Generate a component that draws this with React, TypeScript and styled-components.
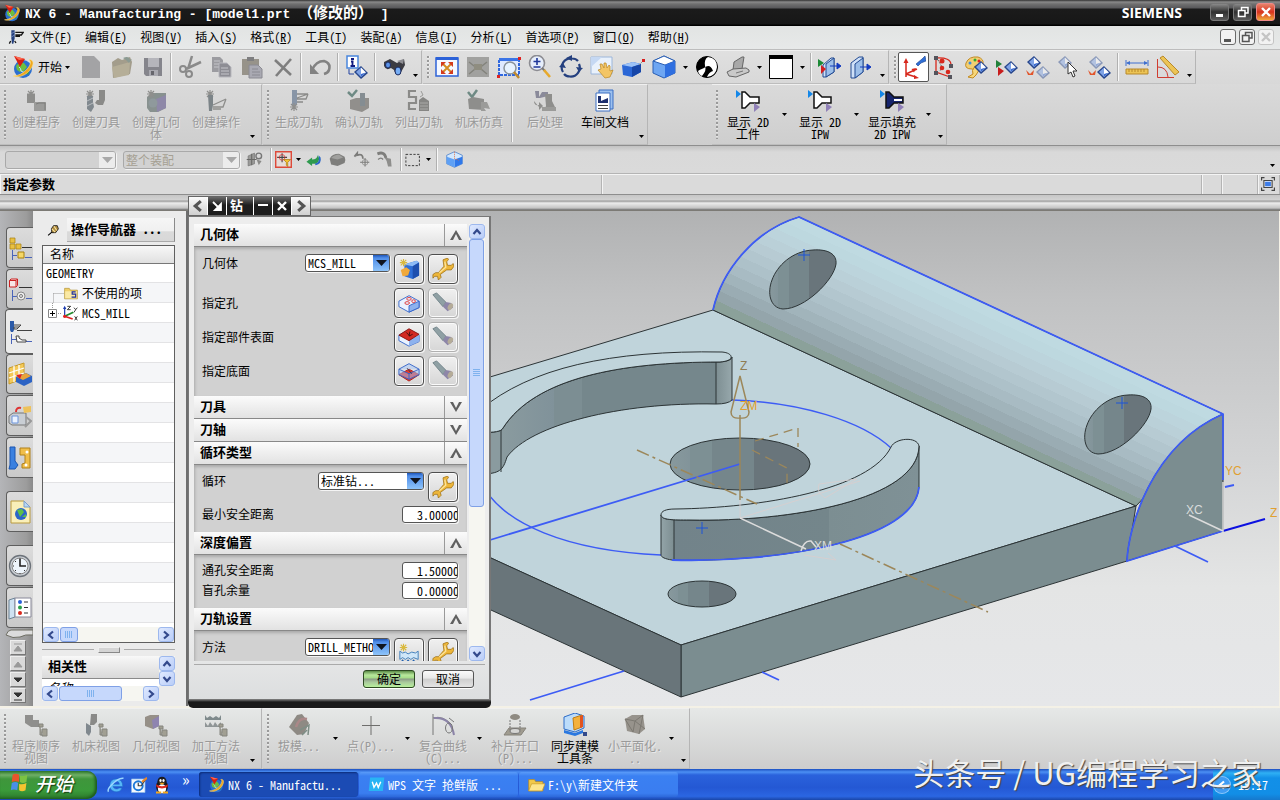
import React from 'react';
import styled, { createGlobalStyle, css } from 'styled-components';

const uiFont = '"Noto Sans Mono CJK SC", "Noto Sans CJK SC", "Liberation Mono", monospace';

const GlobalStyle = createGlobalStyle`
  * { box-sizing: border-box; }
  body { margin: 0; background: #d4d4d4; }
  button, input, select { font: inherit; color: inherit; margin: 0; padding: 0; border: 0; background: none; border-radius: 0; }
  body { font-family: ${uiFont}; font-size: 12px; line-height: 12px; color: #000; }
`;

/* ---------- icons ---------- */

const Svg = styled.svg<{ $s: number }>`
  width: ${p => p.$s}px;
  height: ${p => p.$s}px;
  flex: none;
  display: block;
`;

const Diamond = ({ x, y, pale = false }: { x: number; y: number; pale?: boolean }) => (
  <g transform={`translate(${x} ${y})`} opacity={pale ? 0.45 : 1}>
    <path d="M-7 0L0-6L7 1L0 7Z" fill="#27468c" />
    <path d="M-5 0L0-4.500V5Z" fill="#7fa3e6" />
    <path d="M0-4.500L5 0.500L0 5Z" fill="#fff" />
    <path d="M5 0.500L0 5V2Z" fill="#3a6bd0" />
  </g>
);

const Spark = ({ x, y, c }: { x: number; y: number; c: string }) => (
  <path transform={`translate(${x} ${y})`} d="M0-4V4M-4 0H4M-3-3L3 3M3-3L-3 3" stroke={c} strokeWidth="1.200" />
);

const GT = '#8f8f8d';

const icons: Record<string, React.ReactNode> = {
  nx: (
    <>
      <circle cx="12" cy="14" r="9" fill="#2b6fd0" />
      <path d="M5 11q3-4 8-3l3 4l-3 4l-4 1l-3-2z" fill="#6fbf3f" />
      <path d="M14 17l5-3l-2 6z" fill="#3f9f3a" />
      <path d="M8 12q2 1 2 4l4 2" stroke="#bfe2ff" fill="none" />
      <path d="M2 21C9 24 20 18 22 9C22.500 6 20 4 18 5C20 6 20 9 17 13C13 18 7 21 2 21Z" fill="#f0a71e" stroke="#fbe28a" strokeWidth="0.600" />
      <path d="M3 1L14 4L9 12Z" fill="#d81e12" /><path d="M3 1L14 4L8 5Z" fill="#ff6a50" />
    </>
  ),
  newDoc: <path d="M3 1H15L21 7V23H3Z" fill="#a3a3a5" />,
  open: <><path d="M2 7L8 3L12 5L20 2L22 7L20 19L3 23Z" fill="#a39d8c" /><path d="M2 12L20 7L19 20L4 23Z" fill="#b5ae98" /><path d="M13 3Q19 0 20 5L22 4L19 8L16 5Z" fill="#8b9a92" /></>,
  save: <><path d="M3 3H21V21H5L3 19Z" fill="#85858c" /><path d="M7 3H18V12H7Z" fill="#b5b5bb" /><path d="M8 15H17V21H8Z" fill="#a9a9b0" /><path d="M10 16h3v4h-3z" fill="#66666c" /></>,
  cut: <><path d="M14 1L10 14M23 7L8 14" stroke="#8a8a8a" strokeWidth="2.500" /><circle cx="5" cy="14" r="3" fill="none" stroke="#8a8a8a" strokeWidth="2" /><circle cx="11" cy="19" r="3" fill="none" stroke="#8a8a8a" strokeWidth="2" /></>,
  copy: <><path d="M3 2H11L14 5V17H3Z" fill="#9b9ba0" /><path d="M5 6h6M5 9h6M5 12h6" stroke="#c5c5ca" /><path d="M10 8H18L22 12V22H10Z" fill="#8d8d94" stroke="#b8b8be" /><path d="M12 13h7M12 16h8M12 19h8" stroke="#c5c5ca" /></>,
  paste: <><path d="M2 4H19V20H2Z" fill="#97938a" /><path d="M7 2H14V6H7Z" fill="#7e7e80" /><path d="M9 10H18L22 14V23H9Z" fill="#a9a9b2" stroke="#8a8a92" /><path d="M12 14h6M12 17h8M12 20h8" stroke="#8a8a92" /></>,
  del: <path d="M4 5L20 20M20 4L5 21" stroke="#7f7f7f" strokeWidth="2.600" />,
  undo: <><path d="M4 15Q8 6 16 6Q23 8 21 15Q20 18 16 19" fill="none" stroke="#828282" strokeWidth="2.600" /><path d="M2 9V19H11Z" fill="#828282" /></>,
  info: <><path d="M2 1H13V13H2Z" fill="#fff" stroke="#4a86dd" strokeWidth="1.500" /><path d="M6 4H9M7.500 6.500V11M6 6.500H8.500M5.500 11H10" stroke="#101a80" strokeWidth="1.800" /><path d="M4 14V19H9" stroke="#2343a0" fill="none" /><Diamond x={16} y={17} /></>,
  binoc: <><path d="M2 7L8 4L15 8L22 4L23 10L18 19Q13 20 12 15L9 13Q4 16 2 11Z" fill="#3c3c42" /><path d="M15 6L22 4L21 9Z" fill="#8d8d92" /><ellipse cx="6" cy="10" rx="2.500" ry="3" fill="#5b93e8" stroke="#1b2b60" /><ellipse cx="16" cy="16" rx="3" ry="4" fill="#77aef5" stroke="#1b2b60" /></>,
  fit: <><path d="M1 3H23V21H1Z" fill="#f4f8ff" stroke="#2c62d8" strokeWidth="1.500" /><path d="M1 2H23V5H1Z" fill="#2c62d8" /><path d="M8 9L16 17M16 9L8 17" stroke="#d38a1e" strokeWidth="2" /><path d="M6 7h5l-5 5zM18 7v5l-5-5zM6 19v-5l5 5zM18 19h-5l5-5z" fill="#d33a1e" /></>,
  fitGray: <><path d="M1 2H23V22H1Z" fill="#a1a19f" /><path d="M3 7L12 14L21 7M3 19L9 14M21 19L15 14" stroke="#83837c" fill="none" strokeWidth="1.500" /><path d="M8 9h8v6H8z" fill="#8f8d80" /></>,
  zoomRect: <><path d="M2 4H22V20H2Z" fill="#dfeaff" stroke="#2f67de" strokeWidth="2" strokeDasharray="3 1" /><path d="M2 3H22V6H2Z" fill="#3b74e6" /><circle cx="13" cy="13" r="6" fill="#e8f4ff" stroke="#8a949c" strokeWidth="1.500" /><path d="M17 17L22 23" stroke="#c08a2c" strokeWidth="2.500" /><path d="M21 2h3v3h-3zM0 20h3v3H0z" fill="#d22" /></>,
  zoomPm: <><circle cx="9" cy="8" r="7.500" fill="#e6eefb" stroke="#8c8c92" strokeWidth="1.600" /><path d="M9 3V10M5.500 6.500H12.500M5.500 12H12.500" stroke="#21399a" strokeWidth="1.600" /><path d="M14 13L17 16" stroke="#777" strokeWidth="2" /><path d="M16 15L22 22" stroke="#e7a92c" strokeWidth="2.600" /></>,
  rotate: <><path d="M4 17A9 9 0 0 1 13 3.500Q17 3.500 19 6M20 9A9 9 0 0 1 11 21.500Q7 21.500 5 19" fill="none" stroke="#25407f" strokeWidth="2.200" /><path d="M0 12L4 8L7 13ZM24 13L20 17L17 12ZM7 3L13 0V6Z" fill="#25407f" /></>,
  pan: <><path d="M1 2H22V19H1Z" fill="#e9f1fb" stroke="#9cb6da" /><path d="M1 12L12 2H1Z" fill="#c5d8f3" /><path d="M8 15L11 14L10 9L12 9L14 13L14 8L16 8L17 13L19 10L20 11L20 16L23 15L20 22L15 23Z" fill="#f3c565" stroke="#b98722" strokeWidth="0.700" /></>,
  persp: <><path d="M1 10L12 7L20 9V17L11 22L2 20Z" fill="#2b67d6" /><path d="M1 10L12 7L20 9L11 12Z" fill="#9cc2f7" /><path d="M11 12L20 9V17L11 22Z" fill="#1746a8" /><path d="M18 10L22 6" stroke="#888" strokeDasharray="2 1" /><path d="M21 4h3v3h-3z" fill="#d81e1e" /></>,
  cube: <><path d="M1 6L12 1L23 6V18L12 23L1 18Z" fill="#6ea6f2" stroke="#2b5fb4" /><path d="M1 6L12 1L23 6L13 10Z" fill="#fff" stroke="#2b5fb4" /><path d="M13 10L23 6V18L13 23Z" fill="#2f6fe0" /></>,
  shade: <><circle cx="12" cy="12" r="10.500" fill="#000" stroke="#000" /><path d="M13 2Q22 3 22 12Q21 21 12 22Q14 17 18 16Q15 8 9 13Q4 15 3 16Q4 20 7 21Q12 15 10 11Q9 4 13 2Z" fill="#fff" /></>,
  plane: <><path d="M8 7L16 2H18L16 14L7 15Z" fill="#a8a8a8" stroke="#666" /><path d="M1 17L7 14L20 13L23 15V17L10 22L3 21Z" fill="#c9c9c9" stroke="#666" /><path d="M10 18L17 16" stroke="#777" /></>,
  whiteBox: <><path d="M0.500 0.500H23.500V23.500H0.500Z" fill="#fff" stroke="#000" /><path d="M0 0H24V4H0Z" fill="#000" /></>,
  clip1: <><path d="M5 10L13 3H16V17L8 22H5Z" fill="#cfe0f7" stroke="#234a92" /><path d="M8 9L16 3V17L8 22Z" fill="#9dbfe9" stroke="#234a92" /><path d="M0 4L6 8L0 12Z" fill="#1c8a36" /><path d="M3 10L8 14L3 19Z" fill="#d21f1f" /><path d="M12 11H20M19 8L23 11L19 14Z" stroke="#123ac0" fill="#123ac0" /></>,
  clip2: <><path d="M2 8L10 2H14V17L6 23H2Z" fill="#cfe0f7" stroke="#234a92" /><path d="M6 9L14 3V17L6 23Z" fill="#9dbfe9" stroke="#234a92" /><path d="M11 12H19M18 9L22 12L18 15Z" stroke="#123ac0" fill="#123ac0" /></>,
  csys: <><path d="M4 22V6M4 19L14 22M4 19L15 14" stroke="#d7281c" strokeWidth="1.500" /><path d="M4 3L1.500 8H6.500ZM14 13L9.500 14L12 17.500ZM17 23L12 20V24Z" fill="#d7281c" /><path d="M14 9L20 4L23 1L24 6L19 8L16 11Z" fill="#2f6fd6" stroke="#1a3f8c" strokeWidth="0.600" /></>,
  trace: <><path d="M3 3V17L17 22M3 3Q18 2 18 10" fill="none" stroke="#d7281c" strokeWidth="1.300" /><path d="M5 5L9 12L7 16" stroke="#444" fill="none" strokeDasharray="1 1" /><circle cx="9" cy="6" r="2.500" fill="#d7281c" /><circle cx="9" cy="13" r="2.300" fill="#d7281c" /><circle cx="15" cy="17" r="2.300" fill="#d7281c" /><path d="M1 1h4v4H1zM1 16h4v4H1zM16 9h4v4h-4zM15 20h4v4h-4z" fill="#54545c" /></>,
  palette: <><path d="M2 8Q5 1 14 2Q20 4 19 9L14 10Q10 12 11 15L8 14Q0 14 2 8Z" fill="#f2cf72" stroke="#c38a20" /><path d="M11 11Q7 16 9 19L4 22L9 23L12 20Q15 16 16 12Z" fill="#f7d77a" stroke="#c38a20" /><circle cx="6" cy="8" r="1.500" fill="#3c8ae0" /><circle cx="11" cy="5" r="1.500" fill="#3a3" /><circle cx="15" cy="6" r="1.500" fill="#d22" /><Diamond x={17} y={12} /></>,
  playDia: <><path d="M1 5L7 9L1 13Z" fill="#22813a" /><path d="M3 12L9 16L3 21Z" fill="#c81d1d" /><Diamond x={16} y={12} /></>,
  diaArrow: <><Diamond x={8} y={7} /><Diamond x={17} y={17} pale /><path d="M0 15L4 19L8 15L7 20H2Z" fill="#e2542a" /></>,
  cursorDia: <><Diamond x={8} y={7} pale /><path d="M11 7V19L14 17L16 22L18 21L16 16H20Z" fill="#fff" stroke="#333" /></>,
  diaArrow2: <><Diamond x={8} y={7} pale /><Diamond x={16} y={17} /><path d="M0 15L4 19L8 15L7 20H2Z" fill="#e2542a" /></>,
  ruler: <><path d="M1 14H23V19H1Z" fill="#ecc455" stroke="#b8892a" /><path d="M4 14v3M7 14v3M10 14v3M13 14v3M16 14v3M19 14v3" stroke="#b8892a" /><path d="M1 5V11M23 5V11M2 8H22" stroke="#3f6fcf" /><path d="M1 8L5 6V10ZM23 8L19 6V10Z" fill="#3f6fcf" /></>,
  angle: <><path d="M1.500 4V22.500H18" fill="none" stroke="#d03c30" /><path d="M2 12Q11 12 12 22" fill="none" stroke="#d03c30" /><path d="M4 3L7 1L23 17L19 20Z" fill="#ecc455" stroke="#b8892a" /></>,

  program: <><Spark x={7} y={5} c={GT} /><path d="M3 5h8v9H3z" fill="#8e8e8c" /><path d="M10 13h12v9H10z" fill="#9b9b99" /><path d="M12 15l3-1h6v7" fill="none" stroke="#7c7c7a" /></>,
  tool: <><Spark x={6} y={5} c={GT} /><path d="M3 7h6v6l1 5l-3 5l-4-3z" fill="#80888e" /><path d="M3 12l6-3M3 17l6-3" stroke="#b8bcc0" /><path d="M15 1h6v10l-2 5h-5l-3-2l2-3h2z" fill="#8a8a88" /></>,
  geometry: <><path d="M3 8L8 4H22V19L14 23H6L3 19Z" fill="#88918f" /><path d="M12 10L22 6V19L13 23Z" fill="#8e88a8" /><circle cx="9" cy="14" r="4.500" fill="#8f999c" /><Spark x={7} y={5} c={GT} /></>,
  operation: <><Spark x={6} y={5} c={GT} /><path d="M4 6h5v10l-1 6H5z" fill="#7c8488" /><path d="M9 16L22 10M9 18H19L22 10M9 20H17" stroke="#8e8e8c" fill="none" strokeWidth="1.300" /></>,
  generate: <><path d="M5 1h5v15H5z" fill="#74849a" opacity=".8" /><path d="M10 9L21 5H10M10 10H19L21 5M10 13H16" stroke="#8b8b89" fill="none" strokeWidth="1.300" /><Spark x={7} y={18} c={GT} /></>,
  verify: <><path d="M3 11L9 9H22V19L15 23L3 20Z" fill="#918f8c" /><path d="M13 4h5v13h-5z" fill="#858d92" /><path d="M1 3L5 7L10 1" stroke="#6e8a84" strokeWidth="2.500" fill="none" /></>,
  list: <><path d="M9 2H2V8H9V14H2V20H9" fill="none" stroke="#8a8a88" strokeWidth="2.200" /><path d="M12 11L16 8L22 12V22H12Z" fill="#868684" /><path d="M14 2L16 6L13 8" stroke="#9a9a98" fill="none" /><path d="M13 14h8M13 17h8M13 20h8" stroke="#a9a9a7" /></>,
  simulate: <><path d="M1 3L5 8L10 1" stroke="#6e8a84" strokeWidth="2.500" fill="none" /><path d="M1 10L6 8L17 10V21L2 20Z" fill="#8e8e8c" /><path d="M14 13H20L23 20L17 19L19 22H14Z" fill="#9b9b99" /></>,
  post: <><path d="M2 2h4v6L9 3h6v4L7 9L3 9z" fill="#8a8a9a" /><path d="M1 12Q1 17 6 16V13L10 17L6 21V18" fill="#8e8e8c" /><path d="M12 5h7v7l3 6v4H11l2-5z" fill="#8e8e8c" /><path d="M9 18h14v4H9z" fill="#9b9b99" /></>,
  doc: <><path d="M6 1H20V20H6Z" fill="#9cc0ee" stroke="#3b6fc4" /><path d="M3 4H17V22H3Z" fill="#fff" stroke="#3b6fc4" /><path d="M5 7h3v5l7-3v5H5z" fill="#1c2e6e" /><path d="M5 16.500h10M5 19.500h10" stroke="#444" /></>,
  tube: <><path d="M0 1L5 5L0 9Z" fill="#1487e8" /><path d="M6 3H9L14 8H23V14H14L9 19H6Z" fill="#fff" stroke="#111" strokeWidth="1.500" /><path d="M18 14L24 18L18 23Z" fill="#9080b8" /></>,
  tubeFill: <><path d="M0 1L5 5L0 9Z" fill="#1487e8" /><path d="M6 3H9L14 8H23V14H14L9 19H6Z" fill="#16246c" stroke="#111" strokeWidth="1.500" /><path d="M14 10H22V12H14Z" fill="#fff" /><path d="M18 14L24 18L18 23Z" fill="#9080b8" /></>,

  link: <><path d="M3 7L12 3V18L3 21Z" fill="#9a9a98" stroke="#777" /><path d="M1 12h14M8 4v16" stroke="#6a6a68" strokeWidth="1.500" /><circle cx="18" cy="7" r="4" fill="none" stroke="#777" strokeWidth="2" /><path d="M15 12L22 14L18 20Z" fill="#8a8a88" /></>,
  snapRed: <><path d="M1 1H23V23H1Z" fill="#e6dcd8" stroke="#dd4a3a" strokeWidth="2" /><path d="M10 3V16M3 9H17" stroke="#444" strokeWidth="1.500" /><circle cx="10" cy="9" r="4" fill="none" stroke="#d33" /><path d="M12 12H22L18 16V22L16 20V16Z" fill="#f2c230" stroke="#a8780c" /></>,
  greenArrow: <><path d="M2 15L10 9V12Q17 12 18 6Q23 14 15 18L10 18V21Z" fill="#2e9a4e" /><path d="M14 18Q22 16 19 6L22 9Q24 18 15 20Z" fill="#2a66c8" /></>,
  solid: <><path d="M1 11Q4 4 14 4L22 8Q24 12 22 17L12 21L3 19Z" fill="#7e7e7c" /><path d="M3 10Q8 5 14 5L20 9L12 12Z" fill="#a0a09e" /></>,
  undoPt: <><path d="M2 8L6 3V6Q14 3 14 11" fill="none" stroke="#7b7b79" strokeWidth="2.500" /><circle cx="17" cy="16" r="4" fill="none" stroke="#8a8a88" /><path d="M17 10V22M10 16H23" stroke="#7b7b79" strokeWidth="1.500" /></>,
  pipe: <><path d="M2 4Q12 0 14 10" stroke="#7e7e7c" strokeWidth="4" fill="none" /><path d="M12 9L21 11L22 22H17L15 14Z" fill="#8e8e8c" /><path d="M3 12Q7 8 10 12" stroke="#7e7e7c" strokeWidth="2" fill="none" /></>,
  dashRect: <path d="M2.500 4.500H20.500V19.500H2.500Z" fill="none" stroke="#3c3c3c" strokeWidth="1.300" strokeDasharray="3 2" />,
  cubeSmall: <><path d="M1 6L12 1L23 6V18L12 23L1 18Z" fill="#d4e8fd" stroke="#3a76c8" /><path d="M12 12L23 8V18L12 23Z" fill="#2f78ea" /><path d="M1 8L12 12V23L1 18Z" fill="#5ea0f5" /><path d="M12 1V11L18 13" stroke="#e06a3a" fill="none" strokeDasharray="2 1" /></>,
  fullscreen: <><path d="M1 6V1H6M18 1H23V6M23 18V23H18M6 23H1V18" fill="none" stroke="#444" strokeWidth="2" /><path d="M5 6H19V18H5Z" fill="#fff" stroke="#444" strokeWidth="2" /><path d="M7 8H17V16H7Z" fill="#3d7ce8" /></>,

  assembly: <><path d="M2 2h5v5H2zM2 8h5v5H2zM8 8h5v5H8z" fill="#e9c042" stroke="#a8800f" strokeWidth=".7" /><path d="M14 11.500H24" stroke="#333" /><path d="M4.500 14V24M4 19.500H9M17 21.500H24" stroke="#4a64b8" /><path d="M10 16h6v6h-6z" fill="#f5d767" stroke="#a8800f" /></>,
  constraint: <><path d="M1.500 3.500H8V10H1.500ZM1.500 3.500L3 2H9.500L8 3.500M9.500 2V8.500L8 10" fill="#f8e6e6" stroke="#c22" /><path d="M11 10.500H24" stroke="#333" /><path d="M4.500 13V24M4 19.500H9M18 21.500H24" stroke="#4a64b8" /><circle cx="13" cy="19" r="4" fill="#eee" stroke="#888" /><circle cx="13" cy="19" r="1.500" fill="none" stroke="#777" /></>,
  opNav: <><path d="M2 1h4v9l-1 2H3l-1-2z" fill="#2b5aa8" /><path d="M6 5H13L9 9H6V7H11M9 10.500H24" stroke="#444" fill="none" /><path d="M3.500 14V24M3 19.500H8M18 21.500H24" stroke="#4a64b8" /><path d="M8 16H11V18L14 20H18V22H9Z" fill="#fff" stroke="#444" /></>,
  reuse: <><path d="M1 6L16 1V16L1 22Z" fill="#f4c958" stroke="#c79a2a" /><path d="M1 11L16 6M1 16L16 11M6 4V20M11 3V18" stroke="#fff" strokeWidth="1.300" /><path d="M8 15L18 11L24 14V20L16 24L8 20Z" fill="#2c63c4" /><path d="M9 15L18 11L23 14L15 18Z" fill="#e8a33a" /><path d="M8 13L14 12L12 17Z" fill="#d22" /></>,
  camera: <><path d="M1 12L5 9H18V21H4L1 19Z" fill="#c9ced4" stroke="#777" /><path d="M4 12H10V19H4Z" fill="#eaf2ff" stroke="#6d93d8" /><path d="M18 13L23 17L17 23" fill="none" stroke="#999" strokeWidth="2" /><path d="M15 3L23 2V8L16 9Z" fill="#eec25a" /><path d="M13 4Q8 3 8 8" fill="none" stroke="#d33" strokeWidth="2" /></>,
  tools: <><path d="M2 1h5v14l3 4l-3 4H1l1-4z" fill="#3a80e0" stroke="#1a55b0" /><path d="M12 2H22V22H14V18L17 17V9H12Z" fill="#f0be4a" stroke="#b0801a" /><circle cx="19" cy="6" r="1.500" fill="#fff" /><circle cx="18" cy="19" r="1.500" fill="#fff" /></>,
  web: <><path d="M3 1H16L22 7V23H3Z" fill="#f9efb9" stroke="#b99a3e" /><path d="M16 1V7H22Z" fill="#b8d6f5" stroke="#7aa0cc" /><circle cx="13" cy="14" r="6" fill="#2c65c8" /><path d="M9 10l5-1l2 3l-4 5zM14 17l4-3v3z" fill="#5cc04a" /></>,
  clock: <><circle cx="12" cy="12" r="10.500" fill="#c9ced4" stroke="#6d737a" strokeWidth="1.300" /><circle cx="12" cy="12" r="8" fill="#eef5fc" stroke="#888" /><path d="M12 5V12H18" stroke="#222" fill="none" strokeWidth="1.600" /><path d="M12 4v1M12 19v1M5 12h1M7 7l1 1M17 17l-1-1M7 17l1-1" stroke="#333" /></>,
  roles: <><path d="M1 4L7 2V21L1 23Z" fill="#cfe2f2" stroke="#6d8396" /><path d="M7 2H23V21H7Z" fill="#fff" stroke="#889" /><circle cx="12" cy="6" r="2" fill="#2c62d8" /><circle cx="12" cy="11.500" r="2" fill="#2aa04a" /><circle cx="12" cy="17" r="2" fill="#d8281c" /><path d="M16 6h4M16 11.500h4M16 17h4" stroke="#333" /></>,
  pin: <><path d="M12 3H19L21 9L16 16H9L8 9Z" fill="#b08a3a" stroke="#111" strokeWidth="1.500" /><path d="M13 4L18 12M9 9L15 15" stroke="#f4e3a8" strokeWidth="2" /><path d="M2 21L9 15" stroke="#000" strokeWidth="2" /></>,
  folderTree: <><path d="M1 4H9L11 7H23V22H1Z" fill="#efcf6b" stroke="#a88a2a" /><path d="M2 9H22V21H2Z" fill="#fae9a5" /><path d="M20 10H14V14H20V19H13" fill="none" stroke="#1d2ea0" strokeWidth="2" /></>,
  csysTree: <><path d="M4 17V4" stroke="#1b3bb0" strokeWidth="1.800" /><path d="M4 1L1.500 6H6.500Z" fill="#1b3bb0" /><path d="M4 17L17 11" stroke="#1f8a2c" strokeWidth="2.500" /><path d="M4 17L16 21" stroke="#d22" strokeWidth="2.500" /><circle cx="4" cy="17" r="2.500" fill="#d22" /><path d="M8 2H13L8 7H13M18 4L20.500 7L23 4M20.500 7L18 11M19 17L23 23M23 17L19 23" stroke="#222" fill="none" strokeWidth="1.300" /></>,

  geomNew: <><path d="M7 7L20 3L23 5V19L16 23L7 20Z" fill="#2f6fd6" /><path d="M7 7L20 3L23 5L16 9Z" fill="#8dbbf6" /><path d="M16 9L23 5V19L16 23Z" fill="#1e4fae" /><path d="M3 13L9 10L13 13L11 19L5 20Z" fill="#f0a93a" /><Spark x={6} y={5} c="#d9b93e" /></>,
  wrench: <><path d="M12 2L17 0L18 2L16 4L17 8L21 8L23 6L24 9L21 13L16 13L9 18L10 21L7 24L6 20L3 20L1 22L1 18L4 16L7 16L13 9Z" fill="#edb63a" stroke="#9a6c12" strokeWidth=".8" /><path d="M14 4L15 10L8 16" stroke="#fbe39a" strokeWidth="1.500" fill="none" /></>,
  holes: <><path d="M1 10L12 4L23 10V17L12 22L1 16Z" fill="#eaf2ff" stroke="#3364c8" /><path d="M23 10V17L12 22V15Z" fill="#8db2ee" stroke="#3364c8" /><ellipse cx="12" cy="7.500" rx="2.500" ry="1.500" fill="none" stroke="#d33" /><ellipse cx="10" cy="12" rx="2.500" ry="1.500" fill="none" stroke="#d33" /><ellipse cx="17" cy="10" rx="2" ry="1.500" fill="none" stroke="#d33" /></>,
  topFace: <><path d="M1 10L12 4L23 10V17L12 22L1 16Z" fill="#eaf2ff" stroke="#3364c8" /><path d="M23 10V17L12 22V15Z" fill="#8db2ee" /><path d="M1 10L12 3L23 9L12 16Z" fill="#d32a22" stroke="#8a1510" /><path d="M9 7l4 4M13 6l-1 5l4-2" stroke="#401010" fill="none" /></>,
  bottomFace: <><path d="M1 16L12 10L23 16L12 23Z" fill="#e03a30" stroke="#b01c14" /><path d="M1 10L12 4L23 10V16L12 21L1 16ZM12 15V21M1 10L12 15L23 10" fill="#9dc0f5" fillOpacity=".5" stroke="#3364c8" /><path d="M10 9l5 6" stroke="#334" /></>,
  flashlight: <><path d="M1 3L5 1L15 11L12 16Z" fill="#8fa0a4" stroke="#73848a" /><path d="M12 16L15 11L21 12L23 17L17 21Z" fill="#8d86a8" /><ellipse cx="20" cy="16" rx="2.500" ry="4" fill="#b5ac98" transform="rotate(30 20 16)" /></>,
  method: <><path d="M2 10V19L5 17L8 19L11 17L14 19L17 17L22 19V10L19 12L15 11L11 13L8 11L5 12Z" fill="#cfe6f8" stroke="#3a7ab8" /><path d="M2 24L5 20L8 24L11 20L14 24L17 20L20 24" fill="none" stroke="#1f5fb0" strokeWidth="1.500" /><Spark x={6} y={6} c="#d9b93e" /></>,

  progView: <><path d="M1 2h8v5h6v7H7l-6-4z" fill="#8f8f8d" /><path d="M15 11h4v3h-4zM18 16h5v7h-5zM16 14v8h3" fill="#a19f92" stroke="#85857f" /></>,
  machView: <><path d="M7 1h6v8l-3 3h-4z" fill="#8a8a88" /><path d="M2 10l5 3v6l-2 4l-3-3z" fill="#80888e" /><path d="M15 11h4v3h-4zM18 16h5v7h-5zM16 14v8h3" fill="#a19f92" stroke="#85857f" /></>,
  geomView: <><path d="M1 4L6 2H15V13L9 16L1 13Z" fill="#969088" /><path d="M8 7L15 3V13L9 16Z" fill="#8e84b0" /><path d="M15 13h4v3h-4zM18 17h5v6h-5zM16 15v7h3" fill="#a19f92" stroke="#85857f" /></>,
  methView: <><path d="M1 2V7H17V2L15 5L12 3L9 5L6 3L3 5Z" fill="#7f8a8c" /><path d="M1 14V9L4 13L6 9L9 13L11 9L14 13L17 9V14Z" fill="#8f9596" /><path d="M15 11h4v3h-4zM18 16h5v7h-5zM16 14v8h3" fill="#a19f92" stroke="#85857f" /></>,
  draft: <><path d="M2 14L10 2L15 1L22 10L17 21L10 22Z" fill="#8e8a84" /><path d="M9 14Q12 4 20 6" stroke="#a88" strokeWidth="2.500" fill="none" /><path d="M13 17L22 12L21 22M15 22l5-5" stroke="#7e8e86" fill="none" strokeWidth="1.500" /></>,
  point: <path d="M12 3V22M3 12.500H21" stroke="#6e6e6c" />,
  curve: <><path d="M2 1V22M2 5Q12 2 21 12" stroke="#777" fill="none" /><path d="M3 5Q20 4 23 22" stroke="#8c84a8" strokeWidth="2" fill="none" /><ellipse cx="18" cy="15" rx="3.500" ry="5" fill="none" stroke="#777" /><path d="M18 5L23 9" stroke="#777" /></>,
  patch: <><path d="M6 15H23L18 22H1Z" fill="#a09c90" stroke="#85827a" /><ellipse cx="12" cy="18" rx="5" ry="2.500" fill="#d5d5d3" stroke="#777" /><path d="M7 7V17M17 7V17" stroke="#777" strokeDasharray="2 1" /><ellipse cx="12" cy="4" rx="5" ry="3" fill="#8f8b82" /></>,
  sync: <><path d="M1 4L12 0L21 3V15L12 19L1 16Z" fill="#bcdcfa" stroke="#2c6cc8" /><path d="M10 5L19 2V14L11 17Z" fill="#f3b13c" stroke="#c07d12" /><path d="M17 3L20 2V14L17 15Z" fill="#e25420" /><path d="M1 17L12 20L20 17V20L12 23L1 20Z" fill="#2a78e0" /><path d="M20 19h4v4h-4z" fill="#334a8a" /></>,
  facet: <><path d="M2 6L9 2H20L22 16L16 21L4 18Z" fill="#97938c" /><path d="M2 6L12 8L20 2M12 8L10 19M12 8L22 16M2 6L10 19M20 2L16 21" stroke="#7c7972" fill="none" /></>,

  winlogo: <><path d="M4 3Q7 1 11 3V11Q7 9 3 11Z" fill="#e8552a" /><path d="M12 4Q16 5 20 3L19 11Q15 13 12 11Z" fill="#7cc242" /><path d="M3 12Q7 10 10 12L9 20Q5 18 2 20Z" fill="#4a8fe8" /><path d="M11 13Q15 14 19 12L18 20Q14 22 11 20Z" fill="#f4c430" /></>,
  ie: <><path d="M12 4A8.500 8.500 0 1 0 20 16H16A5 5 0 0 1 8 14H21Q21 4 12 4ZM8 11Q9 7 12.500 7Q16 7 16.500 11Z" fill="#56b7f7" stroke="#1c6ac8" strokeWidth=".7" fillRule="evenodd" /><path d="M2 21Q0 18 6 12Q15 2 22 3" stroke="#9ad8ff" strokeWidth="2" fill="none" /></>,
  outlook: <><path d="M2 4H20V22H2Z" fill="#f4f8fd" stroke="#8ab8ea" /><circle cx="11" cy="13" r="6" fill="none" stroke="#1c78d8" strokeWidth="2.500" /><path d="M11 9V13H15L22 3" stroke="#3a3a3a" fill="none" strokeWidth="1.500" /><path d="M15 7L22 1L23 4L17 9Z" fill="#e8862a" /></>,
  qq: <><ellipse cx="12" cy="14" rx="8" ry="9" fill="#1b1b1f" /><circle cx="12" cy="7" r="6" fill="#1b1b1f" /><ellipse cx="12" cy="17" rx="5.500" ry="6" fill="#fff" /><path d="M4 11Q12 16 20 11L19 15Q12 18 5 15Z" fill="#e02a20" /><ellipse cx="10" cy="6" rx="1.500" ry="2" fill="#fff" /><ellipse cx="14" cy="6" rx="1.500" ry="2" fill="#fff" /><path d="M8 9H16L12 11.500Z" fill="#f6a81c" /><path d="M4 22H11M13 22H20" stroke="#f6a81c" strokeWidth="2.500" /></>,
  wps: <><path d="M3 2H23L21 21H1Z" fill="#29b4f4" /><path d="M6 8L8.500 16L12 10L14.500 16L18 8" fill="none" stroke="#fff" strokeWidth="2" /></>,
  folder: <><path d="M1 5H9L11 8H21V21H1Z" fill="#f2c94a" stroke="#b8861c" /><path d="M5 11H24L20 21H1Z" fill="#fde58c" stroke="#c99a28" /></>,
  menuLogo: <><path d="M5 2h5v12l-2 8H6l-1-8z" fill="#24407e" /><path d="M5 7l5-3M5 12l5-3" stroke="#8fa8d8" /><path d="M11 5H23L20 9H11M11 11H18M4 18l-2 4M10 18l2 3" stroke="#151515" fill="none" strokeWidth="2" /></>,
};

const Icon = ({ name, size = 24 }: { name: string; size?: number }) => (
  <Svg $s={size} viewBox="0 0 24 24" aria-hidden="true">{icons[name]}</Svg>
);

const Triangle = styled.svg`width: 5px; height: 3px; display: block;`;
const Down = () => <Triangle viewBox="0 0 5 3" aria-hidden="true"><path d="M0 0H5L2.500 3Z" fill="#000" /></Triangle>;

const ChevronSvg = styled.svg<{ $s: number }>`width: ${p => p.$s}px; height: ${p => p.$s}px; display: block;`;
const turns = { up: 0, right: 90, down: 180, left: 270 };
const Chevron = ({ dir, color = '#33498c', size = 10 }: { dir: keyof typeof turns; color?: string; size?: number }) => (
  <ChevronSvg $s={size} viewBox="0 0 10 10" aria-hidden="true">
    <path transform={`rotate(${turns[dir]} 5 5)`} d="M1.500 7L5 3L8.500 7" fill="none" stroke={color} strokeWidth="2.200" />
  </ChevronSvg>
);
const FoldSvg = styled.svg`width: 12px; height: 10px; display: block;`;
const FoldMark = ({ open }: { open?: boolean }) => (
  <FoldSvg viewBox="0 0 12 10" aria-hidden="true">
    <path d={open ? 'M0 10L6 0L12 10H9L6 4L3 10Z' : 'M0 0L6 10L12 0H9L6 6L3 0Z'} fill="#606060" />
  </FoldSvg>
);

/* ---------- window chrome ---------- */

const Page = styled.div`
  position: relative;
  display: flex;
  flex-direction: column;
  min-height: 100vh;
  overflow: hidden;
  background: #d4d4d4;
`;

const TitleBar = styled.header`
  display: flex;
  align-items: center;
  height: 26px;
  padding: 0 5px 0 3px;
  gap: 4px;
  color: #fff;
  background: linear-gradient(#333 0, #8a8a8a 2px, #707070 4px, #58585a 8px, #1b1b1b 9px, #171717 24px, #000 25px);
`;
const WindowTitle = styled.h1`
  flex: 1;
  margin: 0;
  white-space: pre;
  font: bold 13px/18px "Liberation Mono", monospace;
`;
const TitleHan = styled.span`font: bold 15px/18px "Noto Sans CJK SC", sans-serif;`;
const Brand = styled.span`
  margin-right: 24px;
  font: bold 14px/18px "Open Sans", sans-serif;
`;
const WindowButton = styled.button<{ $close?: boolean }>`
  display: grid;
  place-items: center;
  width: 19px;
  height: 18px;
  margin-bottom: 3px;
  border-radius: 3px;
  border: 1px solid ${p => (p.$close ? '#e88' : '#777')};
  background: ${p => (p.$close ? 'linear-gradient(#e8836a, #d8321e 50%, #f0a83c)' : 'linear-gradient(#8a8a8a, #303030 50%, #5a5a5a)')};
`;
const Mini = styled.svg`width: 12px; height: 12px; display: block;`;
const MinMark = ({ c }: { c: string }) => <Mini viewBox="0 0 12 12"><path d="M2 8H9V11H2Z" fill={c} /></Mini>;
const RestoreMark = ({ c }: { c: string }) => <Mini viewBox="0 0 12 12"><path d="M4.500 4V1.500H11V7H8.500M1.500 4.500H8V10.500H1.500Z" fill="none" stroke={c} strokeWidth="1.500" /></Mini>;
const CloseMark = ({ c }: { c: string }) => <Mini viewBox="0 0 12 12"><path d="M2 2L10 10M10 2L2 10" stroke={c} strokeWidth="2.400" /></Mini>;

const MenuBar = styled.nav`
  display: flex;
  align-items: center;
  height: 24px;
  padding: 0 6px 2px 8px;
  gap: 13px;
  background: linear-gradient(#e2e4e3, #e7e9e9);
  border-bottom: 1px solid #bdbdbd;
`;
const MenuItem = styled.button`white-space: nowrap;`;
const MenuIcon = styled.span`margin-right: -7px;`;
const MdiButtons = styled.div`display: flex; gap: 3px; margin-left: auto;`;
const MdiButton = styled.button<{ $off?: boolean }>`
  display: grid;
  place-items: center;
  width: 16px;
  height: 16px;
  border: 1px solid ${p => (p.$off ? '#c4c4c4' : '#6a6a6a')};
  border-radius: 3px;
  background: #f2f2f2;
`;

/* ---------- tool bars ---------- */

const ToolRow = styled.div<{ $top?: string; $end?: string }>`
  display: flex;
  background: linear-gradient(${p => p.$top ?? '#dedede'}, ${p => p.$end ?? '#d4d4d4'});
`;
const Group = styled.div<{ $tall?: boolean }>`
  display: flex;
  flex: none;
  align-items: ${p => (p.$tall ? 'stretch' : 'center')};
  height: ${p => (p.$tall ? 61 : 34)}px;
  border: solid;
  border-width: 1px 1px 1px 0;
  border-color: #f0f0f0 #b5b5b5 #bdbdbd;
  margin-right: 1px;
`;
const Grip = styled.span<{ $w?: number }>`
  flex: none;
  width: ${p => p.$w ?? 10}px;
  margin: 5px 0;
  align-self: stretch;
  background: radial-gradient(circle at 1px 1px, #9a9a9a 1px, #fff 1px, transparent 2px) 4px 0 / 4px 4px repeat-y;
`;
const Divider = styled.span`
  flex: none;
  align-self: stretch;
  width: 2px;
  margin: 2px;
  border-left: 1px solid #b0b0b0;
  border-right: 1px solid #f8f8f8;
`;
const ToolButton = styled.button<{ $on?: boolean }>`
  display: grid;
  place-items: center;
  flex: none;
  width: 31px;
  height: 30px;
  ${p => p.$on && css`
    background: #fff;
    border: 1px solid #555;
    border-radius: 2px;
  `}
`;
const StartButton = styled.button`
  display: flex;
  align-items: center;
  gap: 3px;
  width: 65px;
  padding-left: 1px;
`;
const CaretButton = styled.button<{ $low?: boolean }>`
  display: flex;
  flex: none;
  justify-content: center;
  align-items: ${p => (p.$low ? 'flex-end' : 'center')};
  align-self: stretch;
  width: 12px;
  padding-bottom: ${p => (p.$low ? 6 : 0)}px;
`;
const BigButton = styled.button<{ $off?: boolean }>`
  display: flex;
  flex: none;
  flex-direction: column;
  align-items: center;
  gap: 3px;
  width: 60px;
  padding: 4px 5px 0;
  color: ${p => (p.$off ? '#9a9a9a' : '#000')};
  text-shadow: ${p => (p.$off ? '1px 1px 0 #e8e8e8' : 'none')};
  text-align: center;
  line-height: 12px;
`;
const Label = styled.span`white-space: pre; line-height: 12px;`;

const Spacer = styled.span<{ $w?: number }>`${p => (p.$w ? `width: ${p.$w}px; flex: none;` : 'flex: 1;')}`;

type Tool = string | '|' | 'v' | '.';
const Tools = ({ list, on }: { list: Tool[]; on?: string }) => (
  <>
    {list.map((t, i) =>
      t === '|' ? <Divider key={i} />
        : t === 'v' ? <CaretButton key={i} aria-label="下拉"><Down /></CaretButton>
        : t === '.' ? <CaretButton key={i} $low aria-label="工具条选项"><Down /></CaretButton>
        : <ToolButton key={i} $on={t === on} aria-label={t}><Icon name={t} size={24} /></ToolButton>,
    )}
  </>
);

type Big = { icon: string; text: string; off?: boolean; caret?: boolean };
const BigTools = ({ list }: { list: Big[] }) => (
  <>
    {list.map(b => (
      <React.Fragment key={b.text}>
        <BigButton $off={b.off} disabled={b.off}><Icon name={b.icon} /><Label>{b.text}</Label></BigButton>
        {b.caret && <CaretButton aria-label="下拉"><Down /></CaretButton>}
      </React.Fragment>
    ))}
  </>
);

/* ---------- selection and cue bars ---------- */

const SelectionBar = styled.div`
  display: flex;
  align-items: center;
  height: 29px;
  padding: 0 2px 0 5px;
  background: linear-gradient(#c2c2c2, #d9d9d9 6px, #dadada);
  border-top: 1px solid #8e8e8e;
  border-bottom: 1px solid #b4b4b4;
`;
const ComboWrap = styled.span<{ $w: number; $off?: boolean }>`
  display: flex;
  flex: none;
  position: relative;
  width: ${p => p.$w}px;
  height: 18px;
  border: 1px solid ${p => (p.$off ? '#a9a9a9' : '#555')};
  border-radius: 3px;
  overflow: hidden;
  color: ${p => (p.$off ? '#a5a093' : '#000')};
  background: ${p => (p.$off ? '#d2d2d2' : '#fff')};
  box-shadow: 1px 1px 0 #f4f4f4;
`;
const ComboSelect = styled.select`
  flex: 1;
  min-width: 0;
  appearance: none;
  padding-left: 2px;
  outline: none;
  opacity: 1;
  line-height: 16px;
`;
const ComboArrow = styled.span<{ $off?: boolean }>`
  display: grid;
  place-items: center;
  flex: none;
  width: 16px;
  pointer-events: none;
  background: ${p => (p.$off ? '#ececec' : 'linear-gradient(#1f56b8, #4f8de8 3px, #8ec4fa)')};
`;
const ArrowHead = styled.svg`width: 11px; height: 6px; display: block;`;
const Combo = ({ w, value, label, off }: { w: number; value: string; label: string; off?: boolean }) => (
  <ComboWrap $w={w} $off={off}>
    <ComboSelect aria-label={label} disabled={off} defaultValue={value}><option>{value}</option></ComboSelect>
    <ComboArrow $off={off}><ArrowHead viewBox="0 0 11 6"><path d="M0 0H11L5.500 6Z" fill={off ? '#a8a8a8' : '#10151f'} /></ArrowHead></ComboArrow>
  </ComboWrap>
);
const SmallTool = styled.button<{ $w: number }>`
  display: grid;
  place-items: center;
  flex: none;
  width: ${p => p.$w}px;
`;

const CueBar = styled.div`
  display: flex;
  height: 21px;
  background: #dadada;
  border-top: 1px solid #f4f4f4;
  border-bottom: 1px solid #8d8d8d;
`;
const CueCell = styled.div<{ $grow?: boolean; $w?: number }>`
  ${p => (p.$grow ? 'flex: 1;' : `flex: none; width: ${p.$w}px;`)}
  display: flex;
  align-items: center;
  padding: 0 0 2px 3px;
  border-right: 1px solid #b4b4b4;
  box-shadow: inset 1px 0 0 #f4f4f4;
  font-weight: bold;
  font-size: 13px;
`;
const Groove = styled.div`
  height: 16px;
  background: linear-gradient(#c6c6c6 0, #d2d2d2 5px, #9a9a9a 6px, #ececec 8px, #dcdcdc 10px, #c4c4c4 13px, #6e6e6e 15px, #8a867c 16px);
`;

/* ---------- workspace ---------- */

const Workspace = styled.main`
  display: flex;
  flex: 1;
  position: relative;
  min-height: 497px;
  border-bottom: 2px solid #f4f1e6;
`;
const ResourceBar = styled.div`
  display: flex;
  flex: none;
  flex-direction: column;
  width: 33px;
  padding-top: 16px;
  background: linear-gradient(90deg, #b4b5b8, #9c9c9c 80%, #8a8a8a);
`;
const ResourceTab = styled.button<{ $h: number; $on?: boolean; $gap?: number }>`
  display: grid;
  place-items: center;
  height: ${p => p.$h}px;
  margin: 0 0 ${p => p.$gap ?? 2}px ${p => (p.$on ? 5 : 6)}px;
  border: 1px solid #5e5e5e;
  border-right: 0;
  border-radius: 4px 0 0 4px;
  background: ${p => (p.$on ? '#ebebeb' : 'linear-gradient(#dcdcdc, #c9c9c9)')};
`;
const TornTab = styled.svg`width: 28px; height: 11px; margin-left: 5px; display: block;`;
const TabScroller = styled.div`
  display: flex;
  flex-direction: column;
  gap: 1px;
  margin-left: 10px;
`;
const TabScroll = styled.button`
  display: grid;
  place-items: center;
  width: 16px;
  height: 15px;
  border: 1px solid #777;
  border-top-color: #eee;
  border-left-color: #eee;
  background: #d9d9d9;
`;

const Navigator = styled.aside`
  display: flex;
  flex: none;
  flex-direction: column;
  width: 155px;
  padding: 7px 11px 5px 9px;
  background: #ebebeb;
  border-right: 2px solid #6e6e6e;
`;
const NavTop = styled.div`display: flex; align-items: center; height: 24px; gap: 7px; padding-left: 5px;`;
const NavTitle = styled.button`
  flex: 1;
  height: 24px;
  padding: 0 0 2px 4px;
  text-align: left;
  font-weight: bold;
  font-size: 13px;
  white-space: pre;
  background: linear-gradient(#f6f6f6, #f0f0f0 55%, #dadada 60%, #d8d8d8);
  border-right: 1px solid #8a8a8a;
  border-bottom: 1px solid #aaa;
`;
const Tree = styled.div`
  display: flex;
  flex: 1;
  flex-direction: column;
  margin-top: 3px;
  border: 1px solid #5f5f5f;
  background: repeating-linear-gradient(#fff 0 19px, #e3e3e5 19px 20px, #f5f6f8 20px 39px, #e3e3e5 39px 40px) 0 17px;
`;
const TreeTable = styled.table`
  width: 100%;
  border-collapse: collapse;
  th {
    height: 17px;
    padding: 0 0 0 7px;
    text-align: left;
    font-weight: normal;
    background: linear-gradient(#f8f8f8, #e0e0e0);
    border-bottom: 1px solid #777;
  }
  td { height: 20px; padding: 0; }
`;
const TreeCell = styled.div<{ $indent: number }>`
  display: flex;
  align-items: center;
  gap: 4px;
  padding-left: ${p => p.$indent}px;
  white-space: nowrap;
`;
const Branch = styled.svg`width: 14px; height: 20px; display: block; margin-right: -4px;`;
const ScrollTrack = styled.div<{ $vertical?: boolean; $w?: number }>`
  display: flex;
  flex: none;
  flex-direction: ${p => (p.$vertical ? 'column' : 'row')};
  ${p => (p.$vertical ? 'width: 16px;' : 'height: 15px;')}
  ${p => p.$w && `width: ${p.$w}px;`}
  background: #f6f6f1;
`;
const ScrollButton = styled.button`
  display: grid;
  place-items: center;
  flex: none;
  width: 16px;
  height: 15px;
  border: 1px solid #9db8ee;
  border-radius: 3px;
  background: linear-gradient(135deg, #dfe9ff, #b9cdf8);
`;
const Thumb = styled.span<{ $len: number; $vertical?: boolean }>`
  display: grid;
  place-items: center;
  flex: none;
  ${p => (p.$vertical ? `height: ${p.$len}px; width: 15px;` : `width: ${p.$len}px; height: 15px; margin-left: 1px;`)}
  border: 1px solid #7fa0e6;
  border-radius: 3px;
  background: #c6d8fc;
`;
const ThumbMarks = styled.svg`width: 8px; height: 8px; display: block;`;
const Marks = ({ vertical }: { vertical?: boolean }) => (
  <ThumbMarks viewBox="0 0 8 8"><path d={vertical ? 'M0 .5H7M0 2.500H7M0 4.500H7M0 6.500H7' : 'M.5 0V7M2.500 0V7M4.500 0V7M6.500 0V7'} stroke="#7fb2ee" /></ThumbMarks>
);
const Splitter = styled.div`
  display: flex;
  align-items: center;
  gap: 4px;
  height: 13px;
  &::before, &::after { content: ''; flex: 1; height: 1px; background: #aaa; }
`;
const SplitHandle = styled.span`width: 22px; height: 6px; border: 1px solid #999; border-color: #eee #888 #888 #eee; background: #d4d4d4;`;
const Dependencies = styled.div`display: flex; height: 30px; background: #f2f0e4;`;
const DepHead = styled.div`
  flex: 1;
  height: 30px;
  overflow: hidden;
`;
const DepTitle = styled.h2`
  margin: 0;
  height: 23px;
  padding-left: 6px;
  font-size: 13px;
  line-height: 20px;
  background: linear-gradient(#f8f8f8, #d9d9d9);
  border-bottom: 1px solid #8a8a8a;
`;
const DepRow = styled.div`height: 7px; padding: 3px 0 0 8px; overflow: hidden; background: #fff; white-space: pre;`;

const Graphics = styled.section`
  flex: 1;
  min-width: 0;
  position: relative;
  overflow: hidden;
  border-right: 1px solid #f4f1e6;
  background: linear-gradient(#b1b2b3, #c1c2c3 18%, #d3d4d5 50%, #e4e5e5 76%, #e6e7e9);
`;
const Scene = styled.svg`position: absolute; inset: 0; width: 100%; height: 100%; display: block;`;

const Bands = ({ id, x1, x2 }: { id: string; x1: number; x2: number }) => (
  <linearGradient id={id} gradientUnits="userSpaceOnUse" x1={x1} x2={x2} y1="0" y2="0">
    <stop offset="0" stopColor="#88999d" /><stop offset=".14" stopColor="#82949a" />
    <stop offset=".14" stopColor="#7d9094" /><stop offset=".3" stopColor="#7d9094" />
    <stop offset=".3" stopColor="#75868b" /><stop offset=".6" stopColor="#75868b" />
    <stop offset=".6" stopColor="#69757b" /><stop offset="1" stopColor="#69757b" />
  </linearGradient>
);
const HOLE = 'M813 250C828 249 837 254 836 264C834 280 805 309 783 309C770 308 767 293 772 280C777 266 792 251 813 250Z';
const shades = ['#8ba19a', '#94a5ab', '#9aacb3', '#a1b4bb', '#a8bbc3', '#adc1c9', '#b2c6ce', '#b7cbd3', '#bad0d8', '#bcd4dc', '#bdd8df', '#bfdae1'];

const Model = () => (
  <Scene viewBox="188 211 1091 495" preserveAspectRatio="xMinYMin slice" role="img" aria-label="model1.prt">
    <defs>
      <Bands id="hole" x1={769} x2={836} />
      <Bands id="bore" x1={670} x2={810} />
      <Bands id="small" x1={668} x2={736} />
      <linearGradient id="cyl" gradientUnits="userSpaceOnUse" x1="713" y1="310" x2="764" y2="201">
        {shades.map((c, i) => (
          <React.Fragment key={c}>
            <stop offset={i / shades.length} stopColor={c} />
            <stop offset={(i + 1) / shades.length} stopColor={c} />
          </React.Fragment>
        ))}
      </linearGradient>
      <linearGradient id="wallB" gradientUnits="userSpaceOnUse" x1="661" x2="919" y1="0" y2="0">
        <stop offset="0" stopColor="#93a4a8" /><stop offset=".05" stopColor="#7d8e92" />
        <stop offset=".05" stopColor="#72838a" /><stop offset=".65" stopColor="#74868b" />
        <stop offset=".65" stopColor="#7c8e92" /><stop offset="1" stopColor="#7f9196" />
      </linearGradient>
      <linearGradient id="wallT" gradientUnits="userSpaceOnUse" x1="501" x2="732" y1="0" y2="0">
        <stop offset="0" stopColor="#8a9b9f" /><stop offset=".23" stopColor="#80929a" />
        <stop offset=".23" stopColor="#7c8e93" /><stop offset=".35" stopColor="#7c8e93" />
        <stop offset=".35" stopColor="#75878c" /><stop offset=".93" stopColor="#75878c" />
        <stop offset=".93" stopColor="#7d8e92" /><stop offset="1" stopColor="#97a8ac" />
      </linearGradient>
    </defs>
    <g stroke="#2c3436" strokeWidth="1" strokeLinejoin="round">
      <path d="M480 380L713 310L1136 506L681 645L480 553Z" fill="#c0d4db" />
      <path d="M681 645L1136 506L1127 561L681 697Z" fill="#7b8d90" />
      <path d="M480 553L681 645V697L480 605Z" fill="#69757a" />
      <path d="M713 310C722 270 755 230 799 217L1223 414L1136 506Z" fill="url(#cyl)" />
      <path d="M1127 561C1128 530 1150 446 1223 414V531Z" fill="#7b8d90" />
      <path d={HOLE} fill="url(#hole)" />
      <g transform="translate(315 145)"><path d={HOLE} fill="url(#hole)" /></g>
      <ellipse cx="740" cy="464" rx="70" ry="26" fill="url(#bore)" />
      <ellipse cx="702" cy="594" rx="34" ry="13" fill="url(#small)" />
    </g>
    <g fill="none" stroke="#3d5cf5" strokeWidth="1.500">
      <path d="M732 400C800 402 862 421 891 448M480 480C500 525 570 551 661 555" />
    </g>
    <g stroke="#2c3436" strokeWidth="1">
      <path d="M480 433C495 432 501 432 503 428C535 378 620 362 720 362Q732 361 732 357V400Q728 404 716 404C620 402 530 425 507 457C503 470 500 474 480 474Z" fill="url(#wallT)" />
      <path d="M480 410C530 368 610 350 722 352C734 353 735 361 720 362C620 362 535 378 503 428C501 432 495 432 480 433Z" fill="#c0d4db" />
      <path d="M716 362V404M501 430V472" />
      <path d="M661 515C662 520 672 520 690 520C790 522 918 500 919 446V487C915 540 780 563 672 560C665 559 661 557 661 555Z" fill="url(#wallB)" />
      <path d="M661 515C661 511 666 509 675 509C760 508 870 490 891 447C895 438 917 436 919 446C918 500 790 522 690 520C672 520 662 520 661 515Z" fill="#c0d4db" />
      <path d="M674 520V560" />
    </g>
    <g fill="none" stroke="#3d5cf5" strokeWidth="1.800">
      <path d="M713 310C722 270 755 230 799 217L1223 414V480" />
      <path d="M1223 414C1150 446 1128 530 1127 561L1223 531" />
      <path d="M490 540L740 464M672 560C780 563 915 540 919 487" />
      <path d="M530 700L624 671M762 672L779 680M1175 546L1208 562M1225 487L1234 485" />
    </g>
    <path d="M1223 531L1265 519" stroke="#0c10e0" strokeWidth="2" />
    <path d="M804 249V261M798 255H810M1122 397V409M1116 403H1128M702 522V534M696 528H708" stroke="#1d55d8" />
    <g fill="none" stroke="#9c875a" strokeWidth="1.500">
      <path d="M740 376L731 412Q731 419 740 418Q749 419 749 412ZM740 415V500" />
      <path d="M637 450L757 504M840 544L988 612" strokeDasharray="13 4 3 4" />
      <path d="M755 441L798 428V447M752 450L787 468V487" strokeDasharray="9 6" strokeWidth="1.300" />
    </g>
    <g fill="none" stroke="#d5cfd0">
      <path d="M740 500V518L860 481M819 484L857 479L825 498Q816 492 819 484ZM804 555L836 560L828 553" />
      <path d="M740 518L806 549M801 551Q804 540 811 541L816 547M1189 515L1223 531V482" stroke="#dcdcdc" strokeWidth="1.500" />
    </g>
    <g fontFamily="Liberation Sans, sans-serif" fontSize="12">
      <text x="740" y="370" fill="#8f7c52">Z</text>
      <text x="740" y="410" fill="#e0a030">ZM</text>
      <text x="814" y="550" fill="#d8dcdc">XM</text>
      <text x="1225" y="475" fill="#e0a030">YC</text>
      <text x="1186" y="514" fill="#d8dcdc">XC</text>
      <text x="1270" y="517" fill="#e0a030">Z</text>
    </g>
  </Scene>
);

/* ---------- drilling dialog ---------- */

const Dialog = styled.form`
  position: absolute;
  top: -15px;
  bottom: -2px;
  left: 188px;
  width: 303px;
  display: flex;
  flex-direction: column;
`;
const Rail = styled.div`
  display: flex;
  align-self: flex-start;
  height: 20px;
  border: 1px solid #666;
  background: #fff;
  gap: 1px;
`;
const RailButton = styled.button<{ $dark?: boolean }>`
  display: grid;
  place-items: center;
  width: 18px;
  color: #fff;
  background: ${p => (p.$dark ? 'linear-gradient(#6a6a6a, #1e1e1e 45%)' : 'linear-gradient(#fafafa, #d0d0d0)')};
`;
const RailTitle = styled.h2`
  width: 26px;
  margin: 0;
  padding-left: 3px;
  font-size: 13px;
  line-height: 16px;
  color: #fff;
  background: linear-gradient(#6a6a6a, #1e1e1e 45%);
`;
const DialogBody = styled.div`
  display: flex;
  flex: 1;
  flex-direction: column;
  min-height: 0;
  padding: 7px 4px 11px 5px;
  border: 1px solid #777;
  border-width: 1px 2px 0 1px;
  background: linear-gradient(#ededed 85%, #dcdedf);
`;
const DialogFoot = styled.div`
  height: 9px;
  border-radius: 0 0 5px 5px;
  background: linear-gradient(#888, #1a1a1a 3px);
`;
const Scroller = styled.div`
  display: flex;
  flex: 1;
  gap: 2px;
  min-height: 0;
  overflow: hidden;
`;
const Sections = styled.div`flex: 1; min-width: 0;`;
const SectionHead = styled.button`
  display: flex;
  width: 100%;
  height: 23px;
  text-align: left;
  background: linear-gradient(#fbfbfb, #ececec 60%, #e2e2e2);
  border-bottom: 1px solid #888;
`;
const SectionName = styled.span`
  flex: 1;
  padding-left: 6px;
  font-weight: bold;
  font-size: 13px;
  line-height: 20px;
  border-right: 1px solid #999;
`;
const SectionMark = styled.span`display: grid; place-items: center; width: 22px; height: 22px;`;
const SectionBody = styled.div`
  display: flex;
  flex-direction: column;
  gap: 4px;
  padding: 7px 9px 10px 8px;
  background: #d1d1d1;
  box-shadow: inset 1px 2px 3px #aaa;
`;
const FieldRow = styled.div<{ $h: number }>`
  display: flex;
  gap: 4px;
  height: ${p => p.$h}px;
`;
const FieldLabel = styled.label<{ $lh: number }>`flex: 1; line-height: ${p => p.$lh}px; white-space: nowrap;`;
const PushButton = styled.button<{ $off?: boolean }>`
  display: grid;
  place-items: center;
  flex: none;
  width: 30px;
  height: 30px;
  border: 1px solid ${p => (p.$off ? '#b0b0b0' : '#4e4e4e')};
  border-radius: 4px;
  box-shadow: inset 0 0 0 1px #fafafa, 1px 1px 0 #f4f4f4;
  background: linear-gradient(#f0f0f0, #d6d6d6);
`;
const NumberField = styled.input`
  flex: none;
  width: 56px;
  height: 17px;
  padding-left: 14px;
  border: 1px solid #555;
  border-radius: 3px;
  background: #fff;
  box-shadow: 1px 1px 0 #f4f4f4;
`;
const Actions = styled.div`
  display: flex;
  justify-content: flex-end;
  gap: 7px;
  margin-top: 3px;
  padding: 5px 11px 0 0;
  border-top: 1px solid #aaa;
`;
const Action = styled.button<{ $ok?: boolean }>`
  width: 52px;
  height: 18px;
  border: 1px solid ${p => (p.$ok ? '#2d4a22' : '#555')};
  border-radius: 3px;
  box-shadow: 0 1px 0 #fff;
  background: ${p => (p.$ok
    ? 'linear-gradient(#5c8c48 0, #b8e89c 4px, #a4dc88 7px, #8a9c84 8px, #a8c89c 11px, #b8f09c)'
    : 'linear-gradient(#fafafa, #e8e8e8 45%, #cecece 50%, #e4e4e4)')};
`;

const Section = ({ name, open, children }: { name: string; open?: boolean; children?: React.ReactNode }) => (
  <section>
    <SectionHead type="button">
      <SectionName>{name}</SectionName>
      <SectionMark><FoldMark open={open} /></SectionMark>
    </SectionHead>
    {children && <SectionBody>{children}</SectionBody>}
  </section>
);
const PickRow = ({ name, icon }: { name: string; icon: string }) => (
  <FieldRow $h={30}>
    <FieldLabel $lh={29}>{name}</FieldLabel>
    <PushButton type="button" aria-label={name}><Icon name={icon} size={22} /></PushButton>
    <PushButton type="button" $off aria-label="显示"><Icon name="flashlight" size={22} /></PushButton>
  </FieldRow>
);
const NumRow = ({ name, value }: { name: string; value: string }) => (
  <FieldRow $h={16}>
    <FieldLabel $lh={15} htmlFor={name}>{name}</FieldLabel>
    <NumberField id={name} type="text" defaultValue={value} />
  </FieldRow>
);

const DrillDialog = () => (
  <Dialog onSubmit={e => e.preventDefault()}>
    <Rail>
      <RailButton type="button" aria-label="上一个"><Chevron dir="left" color="#555" size={14} /></RailButton>
      <RailButton type="button" $dark aria-label="隐藏"><Mini viewBox="0 0 12 12"><path d="M2 2L8 8M10 4V10H4Z" stroke="#fff" strokeWidth="1.800" fill="#fff" /></Mini></RailButton>
      <RailTitle>钻</RailTitle>
      <RailButton type="button" $dark aria-label="最小化"><Mini viewBox="0 0 12 12"><path d="M1 4H11V6H1Z" fill="#fff" /></Mini></RailButton>
      <RailButton type="button" $dark aria-label="关闭"><CloseMark c="#fff" /></RailButton>
      <RailButton type="button" aria-label="下一个"><Chevron dir="right" color="#555" size={14} /></RailButton>
    </Rail>
    <DialogBody>
      <Scroller>
        <Sections>
          <Section name="几何体" open>
            <FieldRow $h={30}>
              <FieldLabel $lh={18}>几何体</FieldLabel>
              <Combo w={85} value="MCS_MILL" label="几何体" />
              <PushButton type="button" aria-label="新建几何体"><Icon name="geomNew" size={22} /></PushButton>
              <PushButton type="button" aria-label="编辑几何体"><Icon name="wrench" size={22} /></PushButton>
            </FieldRow>
            <PickRow name="指定孔" icon="holes" />
            <PickRow name="指定部件表面" icon="topFace" />
            <PickRow name="指定底面" icon="bottomFace" />
          </Section>
          <Section name="刀具" />
          <Section name="刀轴" />
          <Section name="循环类型" open>
            <FieldRow $h={30}>
              <FieldLabel $lh={18}>循环</FieldLabel>
              <Combo w={106} value="标准钻..." label="循环" />
              <PushButton type="button" aria-label="编辑参数"><Icon name="wrench" size={22} /></PushButton>
            </FieldRow>
            <NumRow name="最小安全距离" value="3.00000" />
          </Section>
          <Section name="深度偏置" open>
            <NumRow name="通孔安全距离" value="1.50000" />
            <NumRow name="盲孔余量" value="0.00000" />
          </Section>
          <Section name="刀轨设置" open>
            <FieldRow $h={30}>
              <FieldLabel $lh={18}>方法</FieldLabel>
              <Combo w={85} value="DRILL_METHOD" label="方法" />
              <PushButton type="button" aria-label="新建方法"><Icon name="method" size={22} /></PushButton>
              <PushButton type="button" aria-label="编辑方法"><Icon name="wrench" size={22} /></PushButton>
            </FieldRow>
          </Section>
        </Sections>
        <ScrollTrack $vertical>
          <ScrollButton type="button" aria-label="向上"><Chevron dir="up" /></ScrollButton>
          <Thumb $len={268} $vertical><Marks vertical /></Thumb>
          <Spacer />
          <ScrollButton type="button" aria-label="向下"><Chevron dir="down" /></ScrollButton>
        </ScrollTrack>
      </Scroller>
      <Actions>
        <Action $ok type="submit">确定</Action>
        <Action type="button">取消</Action>
      </Actions>
    </DialogBody>
    <DialogFoot />
  </Dialog>
);

/* ---------- task bar ---------- */

const TaskBar = styled.footer`
  display: flex;
  align-items: center;
  height: 31px;
  color: #fff;
  background: linear-gradient(#1b4fc0 0, #4c90f4 3px, #2a62dc 6px, #2458d4 60%, #2b66e2 88%, #1a46a8);
`;
const StartMenu = styled.button`
  display: flex;
  align-items: center;
  gap: 4px;
  width: 97px;
  height: 28px;
  padding: 0 0 3px 9px;
  border-radius: 0 10px 10px 0;
  background: linear-gradient(#2f7a2c 0, #6fae66 4px, #3f963c 8px, #3a9a3a 70%, #2c7a2c);
  box-shadow: inset -2px -1px 3px #1d5a1d;
  font: italic 500 19px/24px "Noto Sans CJK SC", sans-serif;
  text-shadow: 1px 1px 1px #123c12;
`;
const Quick = styled.div`display: flex; align-items: center; gap: 5px; width: 102px; padding-left: 10px;`;
const QuickButton = styled.button`display: block;`;
const MoreMark = styled.span`padding: 0 0 12px 6px; font-size: 16px;`;
const TaskButton = styled.button<{ $on?: boolean }>`
  display: flex;
  align-items: center;
  gap: 3px;
  width: 159px;
  height: 25px;
  margin-right: 1px;
  padding-left: 9px;
  border-radius: 3px;
  white-space: pre;
  overflow: hidden;
  background: ${p => (p.$on ? '#1b4bb4' : 'linear-gradient(#5a9bf8, #3a80f2 4px, #3a7df0 85%, #2d68d8)')};
  box-shadow: ${p => (p.$on ? 'inset 1px 1px 2px #0c2c78' : 'none')};
`;
const Tray = styled.div`
  display: flex;
  align-items: center;
  gap: 7px;
  height: 30px;
  width: 67px;
  margin-left: auto;
  background: linear-gradient(#1b7ad8 0, #2fb0f4 3px, #1290e8 8px, #128ee6 80%, #1678cc);
`;
const TrayToggle = styled.button`
  display: grid;
  place-items: center;
  width: 18px;
  height: 18px;
  border-radius: 9px;
  background: #3f9cf4;
  box-shadow: inset 0 0 0 1px #8ac8fa;
`;
const Watermark = styled.p`
  position: absolute;
  right: 18px;
  bottom: 10px;
  margin: 0;
  white-space: pre;
  pointer-events: none;
  font: 31px/36px "Noto Sans CJK SC", sans-serif;
  color: #f0f0f0;
  text-shadow: 1px 1px 1px #444;
`;

const menus: [string, string][] = [
  ['文件', 'F'], ['编辑', 'E'], ['视图', 'V'], ['插入', 'S'], ['格式', 'R'], ['工具', 'T'],
  ['装配', 'A'], ['信息', 'I'], ['分析', 'L'], ['首选项', 'P'], ['窗口', 'O'], ['帮助', 'H'],
];

const tabs = [
  { icon: 'assembly', h: 41, gap: 1 }, { icon: 'constraint', h: 40, gap: 0 },
  { icon: 'opNav', h: 45, on: true, gap: 0 }, { icon: 'reuse', h: 40, gap: 1 },
  { icon: 'camera', h: 41, gap: 1 }, { icon: 'tools', h: 41, gap: 13 }, { icon: 'web', h: 41, gap: 13 },
  { icon: 'clock', h: 41, gap: 1 }, { icon: 'roles', h: 41, gap: 1 },
];

const App = () => (
  <Page>
    <GlobalStyle />
    <TitleBar>
      <Icon name="nx" size={18} />
      <WindowTitle>NX 6 - Manufacturing - [model1.prt <TitleHan>（修改的）</TitleHan> ]</WindowTitle>
      <Brand>SIEMENS</Brand>
      <WindowButton aria-label="最小化"><MinMark c="#fff" /></WindowButton>
      <WindowButton aria-label="还原"><RestoreMark c="#fff" /></WindowButton>
      <WindowButton $close aria-label="关闭"><CloseMark c="#fff" /></WindowButton>
    </TitleBar>
    <MenuBar>
      <MenuIcon><Icon name="menuLogo" size={16} /></MenuIcon>
      {menus.map(([t, k]) => <MenuItem key={k}>{t}(<u>{k}</u>)</MenuItem>)}
      <MdiButtons>
        <MdiButton aria-label="最小化"><MinMark c="#555" /></MdiButton>
        <MdiButton aria-label="还原"><RestoreMark c="#555" /></MdiButton>
        <MdiButton $off aria-label="关闭"><CloseMark c="#c4c4c4" /></MdiButton>
      </MdiButtons>
    </MenuBar>

    <ToolRow $top="#e0e0e0" $end="#d8d8d8">
      <Group>
        <Grip />
        <StartButton><Icon name="nx" size={24} /><Label>开始</Label><Down /></StartButton>
        <Tools list={['newDoc', 'open', 'save', '|', 'cut', 'copy', 'paste', 'del', '|', 'undo', '|', 'info', '|', 'binoc', '.']} />
      </Group>
      <Group>
        <Grip $w={8} />
        <Tools list={['fit', 'fitGray', 'zoomRect', 'zoomPm', 'rotate', 'pan', 'persp', 'cube', 'v', 'shade', 'plane', 'v', 'whiteBox', 'v', '|', 'clip1', 'clip2', '.']} />
      </Group>
      <Group>
        <Grip $w={8} />
        <Tools on="csys" list={['csys', 'trace', 'palette', 'playDia', 'diaArrow', 'cursorDia', 'diaArrow2', '|', 'ruler', 'angle', '.']} />
      </Group>
    </ToolRow>

    <ToolRow $top="#dadada" $end="#cecece">
      <Group $tall>
        <Grip $w={6} />
        <BigTools list={[
          { icon: 'program', text: '创建程序', off: true }, { icon: 'tool', text: '创建刀具', off: true },
          { icon: 'geometry', text: '创建几何\n体', off: true }, { icon: 'operation', text: '创建操作', off: true },
        ]} />
        <CaretButton $low aria-label="工具条选项"><Down /></CaretButton>
        <Spacer $w={3} />
      </Group>
      <Group $tall>
        <Grip $w={6} />
        <BigTools list={[
          { icon: 'generate', text: '生成刀轨', off: true }, { icon: 'verify', text: '确认刀轨', off: true },
          { icon: 'list', text: '列出刀轨', off: true }, { icon: 'simulate', text: '机床仿真', off: true },
        ]} />
        <Divider />
        <BigTools list={[{ icon: 'post', text: '后处理', off: true }, { icon: 'doc', text: '车间文档' }]} />
        <CaretButton $low aria-label="工具条选项"><Down /></CaretButton>
      </Group>
      <Spacer $w={63} />
      <Group $tall>
        <Grip $w={6} />
        <BigTools list={[
          { icon: 'tube', text: '显示 2D\n工件', caret: true }, { icon: 'tube', text: '显示 2D\nIPW', caret: true },
          { icon: 'tubeFill', text: '显示填充\n2D IPW', caret: true },
        ]} />
        <CaretButton $low aria-label="工具条选项"><Down /></CaretButton>
      </Group>
    </ToolRow>

    <SelectionBar>
      <Combo w={111} value="" label="类型过滤器" off />
      <Spacer $w={7} />
      <Combo w={117} value="整个装配" label="选择范围" off />
      <SmallTool $w={28} aria-label="过滤"><Icon name="link" size={17} /></SmallTool>
      <Divider />
      <SmallTool $w={18} aria-label="捕捉"><Icon name="snapRed" size={17} /></SmallTool>
      <CaretButton aria-label="下拉"><Down /></CaretButton>
      <SmallTool $w={18} aria-label="返回"><Icon name="greenArrow" size={17} /></SmallTool>
      <SmallTool $w={30} aria-label="实体"><Icon name="solid" size={17} /></SmallTool>
      <SmallTool $w={18} aria-label="点"><Icon name="undoPt" size={17} /></SmallTool>
      <SmallTool $w={28} aria-label="管"><Icon name="pipe" size={17} /></SmallTool>
      <Divider />
      <SmallTool $w={18} aria-label="矩形"><Icon name="dashRect" size={18} /></SmallTool>
      <CaretButton aria-label="下拉"><Down /></CaretButton>
      <Divider />
      <SmallTool $w={28} aria-label="着色"><Icon name="cubeSmall" size={17} /></SmallTool>
      <Spacer />
      <CaretButton $low aria-label="工具条选项"><Down /></CaretButton>
    </SelectionBar>

    <CueBar>
      <CueCell $w={602}>指定参数</CueCell>
      <CueCell $grow />
      <CueCell $w={20} />
      <CueCell $w={36} />
      <CueCell $w={22}><Icon name="fullscreen" size={14} /></CueCell>
    </CueBar>
    <Groove />

    <Workspace>
      <ResourceBar>
        {tabs.map(t => <ResourceTab key={t.icon} $h={t.h} $on={t.on} $gap={t.gap} aria-label={t.icon}><Icon name={t.icon} size={24} /></ResourceTab>)}
        <TornTab viewBox="0 0 28 11"><path d="M1 6Q3 1 6 1H28V6Q20 5 15 8Q8 10 1 6Z" fill="#dcdcdc" stroke="#6e6e64" /></TornTab>
        <TabScroller>
          {['M2 2H10M6 4L10 9H2Z', 'M6 4L10 9H2Z'].map(d => (
            <TabScroll key={d} aria-label="向上"><Mini viewBox="0 0 12 12"><path d={d} fill="#999" stroke="#999" /></Mini></TabScroll>
          ))}
          {['M2 4H10L6 8Z', 'M2 3H10L6 7ZM2 10H10'].map(d => (
            <TabScroll key={d} aria-label="向下"><Mini viewBox="0 0 12 12"><path d={d} fill="#333" stroke="#333" /></Mini></TabScroll>
          ))}
        </TabScroller>
      </ResourceBar>

      <Navigator>
        <NavTop><Icon name="pin" size={13} /><NavTitle>操作导航器 ...</NavTitle></NavTop>
        <Tree>
          <TreeTable>
            <thead><tr><th>名称</th></tr></thead>
            <tbody>
              <tr><td><TreeCell $indent={3}>GEOMETRY</TreeCell></td></tr>
              <tr><td><TreeCell $indent={7}>
                <Branch viewBox="0 0 14 20"><path d="M3.500 10.500H14M3.500 10.500V20" stroke="#999" strokeDasharray="1 1" fill="none" /></Branch>
                <Icon name="folderTree" size={14} />不使用的项
              </TreeCell></td></tr>
              <tr><td><TreeCell $indent={5}>
                <Branch viewBox="0 0 14 20"><path d="M.5 6.500H8.500V14.500H.5Z" fill="#fff" stroke="#888" /><path d="M2 10.500H7M4.500 8V13" stroke="#000" /><path d="M10 10.500H14M4.500 0V6" stroke="#999" strokeDasharray="1 1" /></Branch>
                <Icon name="csysTree" size={16} />MCS_MILL
              </TreeCell></td></tr>
            </tbody>
          </TreeTable>
          <Spacer />
          <ScrollTrack>
            <ScrollButton aria-label="向左"><Chevron dir="left" /></ScrollButton>
            <Thumb $len={18}><Marks /></Thumb>
            <Spacer />
            <ScrollButton aria-label="向右"><Chevron dir="right" /></ScrollButton>
          </ScrollTrack>
        </Tree>
        <Splitter><SplitHandle /></Splitter>
        <Dependencies>
          <DepHead><DepTitle>相关性</DepTitle><DepRow>名称</DepRow></DepHead>
          <ScrollTrack $vertical>
            <ScrollButton aria-label="向上"><Chevron dir="up" /></ScrollButton>
            <ScrollButton aria-label="向下"><Chevron dir="down" /></ScrollButton>
          </ScrollTrack>
        </Dependencies>
        <ScrollTrack $w={117}>
          <ScrollButton aria-label="向左"><Chevron dir="left" /></ScrollButton>
          <Thumb $len={63}><Marks /></Thumb>
          <Spacer />
          <ScrollButton aria-label="向右"><Chevron dir="right" /></ScrollButton>
        </ScrollTrack>
      </Navigator>

      <Graphics><Model /></Graphics>
      <DrillDialog />
    </Workspace>

    <ToolRow $top="#e6e8e7" $end="#cdcdcd">
      <Group $tall>
        <Grip $w={6} />
        <BigTools list={[
          { icon: 'progView', text: '程序顺序\n视图', off: true }, { icon: 'machView', text: '机床视图', off: true },
          { icon: 'geomView', text: '几何视图', off: true }, { icon: 'methView', text: '加工方法\n视图', off: true },
        ]} />
        <CaretButton $low aria-label="工具条选项"><Down /></CaretButton>
        <Spacer $w={3} />
      </Group>
      <Group $tall>
        <Grip $w={6} />
        <BigTools list={[
          { icon: 'draft', text: '拔模...', off: true, caret: true }, { icon: 'point', text: '点(P)...', off: true, caret: true },
          { icon: 'curve', text: '复合曲线\n(C)...', off: true, caret: true }, { icon: 'patch', text: '补片开口\n(P)...', off: true },
          { icon: 'sync', text: '同步建模\n工具条' }, { icon: 'facet', text: '小平面化.\n..', off: true, caret: true },
        ]} />
        <CaretButton $low aria-label="工具条选项"><Down /></CaretButton>
      </Group>
    </ToolRow>

    <TaskBar>
      <StartMenu><Icon name="winlogo" size={22} />开始</StartMenu>
      <Quick>
        <QuickButton aria-label="Internet Explorer"><Icon name="ie" size={18} /></QuickButton>
        <QuickButton aria-label="Outlook"><Icon name="outlook" size={18} /></QuickButton>
        <QuickButton aria-label="QQ"><Icon name="qq" size={18} /></QuickButton>
        <MoreMark>»</MoreMark>
      </Quick>
      <TaskButton $on><Icon name="nx" size={17} />NX 6 - Manufactu...</TaskButton>
      <TaskButton><Icon name="wps" size={17} />WPS 文字 抢鲜版 ...</TaskButton>
      <TaskButton><Icon name="folder" size={17} />F:\y\新建文件夹</TaskButton>
      <Tray>
        <TrayToggle aria-label="显示隐藏的图标"><Chevron dir="left" color="#fff" /></TrayToggle>
        <time>15:17</time>
      </Tray>
    </TaskBar>
    <Watermark>头条号 / UG编程学习之家</Watermark>
  </Page>
);

export default App;
